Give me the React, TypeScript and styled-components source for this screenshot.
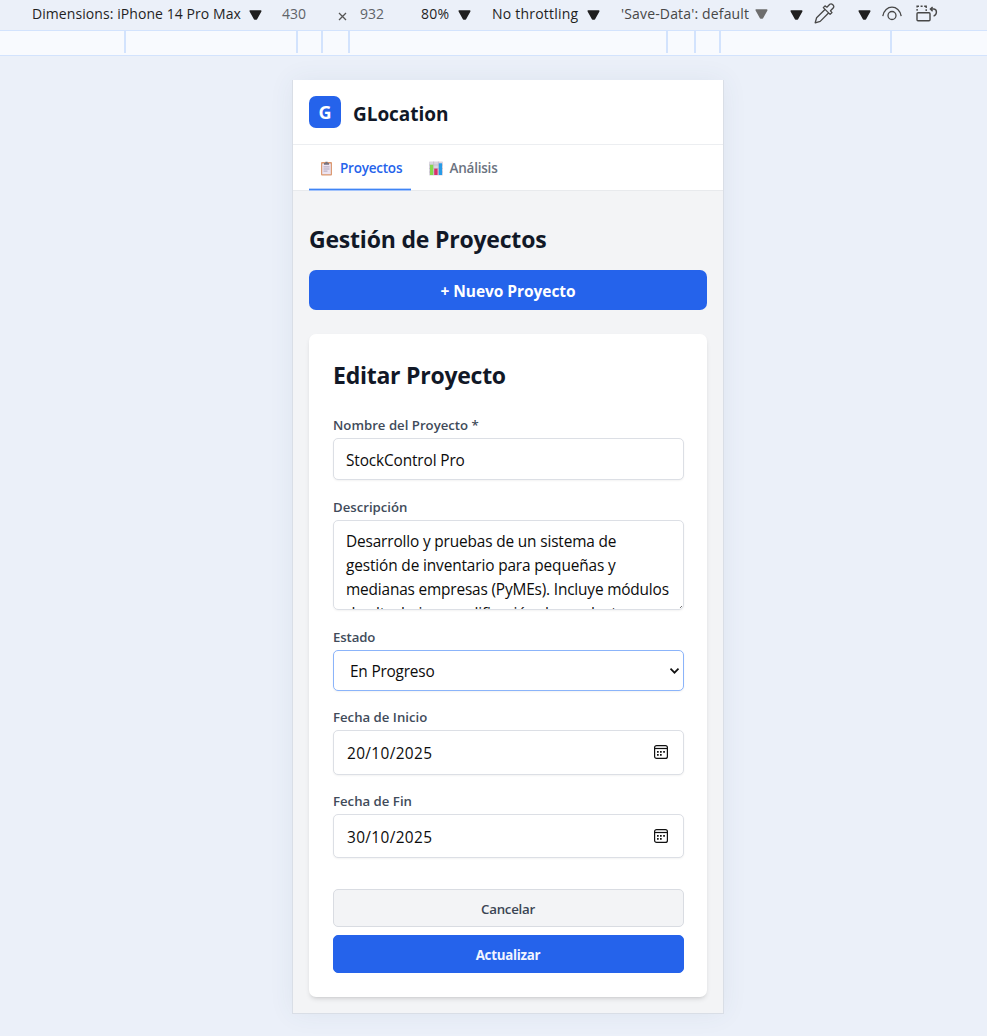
import React from "react";
import styled, { createGlobalStyle } from "styled-components";

const Global = createGlobalStyle`
  * { box-sizing: border-box; }
  body {
    margin: 0;
    background: #ebf0f9;
    font-family: "Open Sans", "Noto Sans", sans-serif;
    color: #111827;
    overflow: hidden;
  }
  h1, h2, p { margin: 0; }
`;

const Screen = styled.div`
  width: 987px;
  height: 1036px;
  display: flex;
  flex-direction: column;
  background: #ebf0f9;
`;

const Toolbar = styled.div`
  height: 30px;
  display: flex;
  align-items: flex-start;
  background: #ebf0f9;
  white-space: nowrap;
`;

const ToolText = styled.span<{ $w: number; $gap: number; $ls?: number; $color?: string }>`
  width: ${(p) => p.$w}px;
  margin-left: ${(p) => p.$gap}px;
  flex: none;
  font-size: 14px;
  line-height: 28px;
  letter-spacing: ${(p) => p.$ls ?? 0}px;
  color: ${(p) => p.$color ?? "#1f1f1f"};
`;

const ToolIcon = styled.svg<{ $gap: number; $top: number }>`
  flex: none;
  display: block;
  margin-left: ${(p) => p.$gap}px;
  margin-top: ${(p) => p.$top}px;
`;

const Ruler = styled.div`
  height: 26px;
  flex: none;
  display: flex;
  background: #f8fafe;
  border-top: 1px solid #d3e3fd;
  border-bottom: 1px solid #d3e3fd;
`;

const Segment = styled.div<{ $w: number }>`
  width: ${(p) => p.$w}px;
  height: 22px;
  border-right: 2px solid #d3e3fd;
`;

const Stage = styled.div`
  display: flex;
  justify-content: center;
  padding: 24px 0 0 29px;
`;

const Device = styled.main`
  width: 432px;
  height: 934px;
  background: #f3f4f6;
  border: 1px solid #d9dee6;
  border-top: 0;
  box-shadow: 0 0 24px rgba(60, 80, 120, 0.07);
  display: flex;
  flex-direction: column;
`;

const Header = styled.header`
  height: 65px;
  flex: none;
  padding: 0 16px;
  display: flex;
  align-items: center;
  gap: 12px;
  background: #fff;
  border-bottom: 1px solid #eceef1;
`;

const Logo = styled.div`
  width: 32px;
  height: 32px;
  border-radius: 7px;
  background: #2563eb;
  color: #fff;
  font-weight: 700;
  font-size: 18px;
  line-height: 33px;
  text-align: center;
`;

const Brand = styled.div`
  font-weight: 700;
  font-size: 19px;
  line-height: 28px;
  padding-top: 3px;
  letter-spacing: -0.05px;
`;

const Tabs = styled.nav`
  height: 46px;
  flex: none;
  padding: 0 16px;
  display: flex;
  background: linear-gradient(to top, #e8eaed 1px, #fff 1px);
`;

const Tab = styled.div<{ $active?: boolean; $w: number; $gap: number }>`
  width: ${(p) => p.$w}px;
  height: 46px;
  padding-left: 11px;
  display: flex;
  align-items: center;
  gap: ${(p) => p.$gap}px;
  font-size: 13.5px;
  font-weight: 600;
  letter-spacing: -0.22px;
  margin-right: 7px;
  color: ${(p) => (p.$active ? "#2563eb" : "#6b7280")};
  background: ${(p) =>
    p.$active
      ? "linear-gradient(to top, #a3c3fb 1px, #3f84f5 1px, #3f84f5 2px, #b9d2fc 2px, #b9d2fc 3px, transparent 3px)"
      : "none"};
`;

const Content = styled.div`
  padding: 32px 16px 0;
  display: flex;
  flex-direction: column;
`;

const Title = styled.h1<{ $ls: number }>`
  font-weight: 700;
  font-size: 23px;
  line-height: 32px;
  letter-spacing: ${(p) => p.$ls}px;
`;

const Primary = styled.div`
  height: 40px;
  margin-top: 15px;
  border-radius: 7px;
  background: #2563eb;
  color: #fff;
  font-weight: 700;
  font-size: 15.5px;
  line-height: 43px;
  letter-spacing: -0.05px;
  text-align: center;
`;

const Card = styled.section`
  margin-top: 24px;
  height: 663px;
  padding: 25px 23px 0 24px;
  border-radius: 7px;
  background: #fff;
  box-shadow: 0 3px 5px -1px rgba(0, 0, 0, 0.12), 0 2px 3px -2px rgba(0, 0, 0, 0.1);
`;

const Label = styled.div<{ $top: number; $ls?: number }>`
  margin-top: ${(p) => p.$top}px;
  height: 20px;
  font-size: 13.2px;
  line-height: 20px;
  font-weight: 600;
  color: #414b5a;
  letter-spacing: ${(p) => p.$ls ?? 0}px;
`;

const Field = styled.div<{ $h: number; $focus?: boolean; $pad?: number; $right?: number }>`
  height: ${(p) => p.$h}px;
  margin-top: 3px;
  padding: 2px ${(p) => p.$right ?? 15}px 0 ${(p) => p.$pad ?? 12}px;
  display: flex;
  align-items: center;
  justify-content: space-between;
  border: 1px solid ${(p) => (p.$focus ? "#8bb4fa" : "#dcdfe5")};
  border-radius: 5px;
  background: #fff;
  box-shadow: 0 1px 2px rgba(0, 0, 0, 0.05);
  font-size: 15.4px;
  color: #0c0c0c;

  svg { margin-bottom: 2px; }
`;

const Value = styled.span<{ $ls: number }>`
  letter-spacing: ${(p) => p.$ls}px;
`;

const Area = styled.div`
  position: relative;
  height: 90px;
  margin-top: 3px;
  padding: 9px 0 0 12px;
  overflow: hidden;
  border: 1px solid #dcdfe5;
  border-radius: 5px;
  box-shadow: 0 1px 2px rgba(0, 0, 0, 0.05);
  font-size: 15.4px;
  line-height: 24px;
  color: #0c0c0c;
  white-space: nowrap;
`;

const ResizeGrip = styled.svg`
  position: absolute;
  right: 0;
  bottom: 0;
`;

const Line = styled.p<{ $ls: number }>`
  letter-spacing: ${(p) => p.$ls}px;
`;

const Button = styled.div<{ $primary?: boolean }>`
  height: 38px;
  border-radius: 5px;
  text-align: center;
  padding-right: 1px;
  font-size: 13.3px;
  line-height: 38.5px;
  letter-spacing: -0.25px;
  font-weight: ${(p) => (p.$primary ? 700 : 600)};
  color: ${(p) => (p.$primary ? "#f1f5ff" : "#3b4554")};
  background: ${(p) => (p.$primary ? "#2563eb" : "#f3f4f6")};
  border: 1px solid ${(p) => (p.$primary ? "#2563eb" : "#d9dce2")};
`;

const Actions = styled.div`
  margin-top: 31px;
  display: flex;
  flex-direction: column;
  gap: 8px;
`;

const Caret = ({ gap, top = 10, color = "#1f1f1f" }: { gap: number; top?: number; color?: string }) => (
  <ToolIcon $gap={gap} $top={top} width="13" height="11" viewBox="0 0 13 11">
    <path d="M1.3 1 H11.7 L7.4 8.9 H5.6Z" fill={color} stroke={color} strokeWidth="1.6" strokeLinejoin="round" />
  </ToolIcon>
);

const CalendarIcon = () => (
  <svg width="14" height="15" viewBox="0 0 14 15" fill="none">
    <rect x=".6" y=".6" width="12.8" height="12.8" rx="2" stroke="#111" strokeWidth="1.2" />
    <path d="M.6 3.5H13.4" stroke="#111" strokeWidth="1.2" />
    <path d="M6 6.9H7.7M9.2 6.9H10.9M3 6.9H4.7M3 9.9H4.7M6 9.9H7.7" stroke="#111" strokeWidth="1.7" />
  </svg>
);

const ClipboardIcon = () => (
  <svg width="13" height="15" viewBox="0 0 13 15">
    <rect x="1" y="1" width="11" height="13.4" rx="1" fill="#dc9a72" />
    <rect x="2.2" y="2.6" width="8.6" height="10.6" fill="#ece3f1" />
    <path d="M4 3.8V2.1H5.4V.8H7.6V2.1H9V3.8Z" fill="#77727d" />
    <path d="M3.5 5.9H9.5M3.5 8H9.5M3.5 10.1H7.5" stroke="#aaa0b5" strokeWidth=".9" />
  </svg>
);

const ChartIcon = () => (
  <svg width="14" height="15" viewBox="0 0 14 15">
    <rect x="0" y=".5" width="14" height="14" rx=".8" fill="#d9d5df" />
    <path d="M0 4H14M0 7.5H14M0 11H14M4.6 .5V14M9.4 .5V14" stroke="#bbb5c5" strokeWidth=".6" />
    <rect x="1" y="3.8" width="3.2" height="10.2" fill="#86d94c" />
    <rect x="5.2" y="7.6" width="3.4" height="6.4" fill="#d9306b" />
    <rect x="9.8" y="2.3" width="3.2" height="11.7" fill="#279be8" />
  </svg>
);

const segments = [126, 172, 25, 27, 318, 28, 25, 171];

export default function App() {
  return (
    <Screen>
      <Global />
      <Toolbar>
        <ToolText $gap={32} $w={209} $ls={0.07}>Dimensions: iPhone 14 Pro Max</ToolText>
        <Caret gap={8} />
        <ToolText $gap={20} $w={24} $color="#5f6368">430</ToolText>
        <ToolIcon $gap={32} $top={12} width="9" height="9" viewBox="0 0 9 9">
          <path d="M1 1L8 8M8 1L1 8" stroke="#555" strokeWidth="1.3" />
        </ToolIcon>
        <ToolText $gap={13} $w={24} $color="#5f6368">932</ToolText>
        <ToolText $gap={37} $w={29} $ls={0.2}>80%</ToolText>
        <Caret gap={8} />
        <ToolText $gap={21} $w={87} $ls={0.22}>No throttling</ToolText>
        <Caret gap={8} />
        <ToolText $gap={21} $w={128} $ls={0.16} $color="#474747">'Save-Data': default</ToolText>
        <Caret gap={6} top={9} color="#6e6e6e" />
        <Caret gap={22} />
        <ToolIcon $gap={11} $top={3} width="21" height="21" viewBox="0 0 21 21" fill="none" stroke="#474747" strokeWidth="1.3" strokeLinejoin="round">
          <path d="M11.2 6.2L2.6 14.8L1.2 19.8L6.2 18.4L14.8 9.8" />
          <path d="M9.3 4.6L11 2.9L12.9 4.2L15.8 1.3C17.7-.1 20.8 2.8 19.4 4.8L16.5 7.8L18 9.6L16.1 11.4Z" />
        </ToolIcon>
        <Caret gap={23} />
        <ToolIcon $gap={11} $top={6} width="20" height="15" viewBox="0 0 20 15" fill="none" stroke="#474747" strokeWidth="1.3">
          <path d="M.8 10.2C2.5-1.8 17.5-1.8 19.2 10.2" />
          <circle cx="10" cy="9.5" r="4" />
        </ToolIcon>
        <ToolIcon $gap={14} $top={5} width="22" height="17" viewBox="0 0 22 17" fill="none" stroke="#474747" strokeWidth="1.4">
          <rect x="1" y="7.7" width="13" height="8" rx="1" />
          <path d="M1.1 5.8V4M1.1 2.6V1.2H3M4.6 1.2H6.6M8.2 1.2H10.2V3M10.2 4.3V6" />
          <path d="M16.6 2L14.4 4L16.6 6.3M14.8 4H18C21.4 4.5 21.2 10 17.6 11.2" />
        </ToolIcon>
      </Toolbar>
      <Ruler>
        {segments.map((w, i) => (
          <Segment key={i} $w={w} />
        ))}
      </Ruler>
      <Stage>
        <Device>
          <Header>
            <Logo>G</Logo>
            <Brand>GLocation</Brand>
          </Header>
          <Tabs>
            <Tab $active $w={102} $gap={7}><ClipboardIcon />Proyectos</Tab>
            <Tab $w={100} $gap={6.5}><ChartIcon />Análisis</Tab>
          </Tabs>
          <Content>
            <Title $ls={-0.2}>Gestión de Proyectos</Title>
            <Primary>+ Nuevo Proyecto</Primary>
            <Card>
              <Title as="h2" $ls={-0.25}>Editar Proyecto</Title>
              <Label $top={24}>Nombre del Proyecto *</Label>
              <Field $h={42}><Value $ls={-0.13}>StockControl Pro</Value></Field>
              <Label $top={17}>Descripción</Label>
              <Area>
                <Line $ls={-0.15}>Desarrollo y pruebas de un sistema de</Line>
                <Line $ls={-0.13}>gestión de inventario para pequeñas y</Line>
                <Line $ls={-0.17}>medianas empresas (PyMEs). Incluye módulos</Line>
                <Line $ls={-0.17}>de alta, baja y modificación de productos,</Line>
                <ResizeGrip width="4" height="4" viewBox="0 0 4 4">
                  <path d="M1.2 2.8L2.8 1.2" stroke="#555" strokeWidth="1" />
                </ResizeGrip>
              </Area>
              <Label $top={17} $ls={-0.1}>Estado</Label>
              <Field $h={41} $focus $pad={16} $right={3}>
                <Value $ls={-0.2}>En Progreso</Value>
                <svg width="11" height="8" viewBox="0 0 11 8" fill="none">
                  <path d="M1.5 1.7L5.5 5.7L9.5 1.7" stroke="#111" strokeWidth="1.7" />
                </svg>
              </Field>
              <Label $top={16}>Fecha de Inicio</Label>
              <Field $h={45} $pad={13}><Value $ls={0.36}>20/10/2025</Value><CalendarIcon /></Field>
              <Label $top={16}>Fecha de Fin</Label>
              <Field $h={44} $pad={13}><Value $ls={0.36}>30/10/2025</Value><CalendarIcon /></Field>
              <Actions>
                <Button>Cancelar</Button>
                <Button $primary>Actualizar</Button>
              </Actions>
            </Card>
          </Content>
        </Device>
      </Stage>
    </Screen>
  );
}
